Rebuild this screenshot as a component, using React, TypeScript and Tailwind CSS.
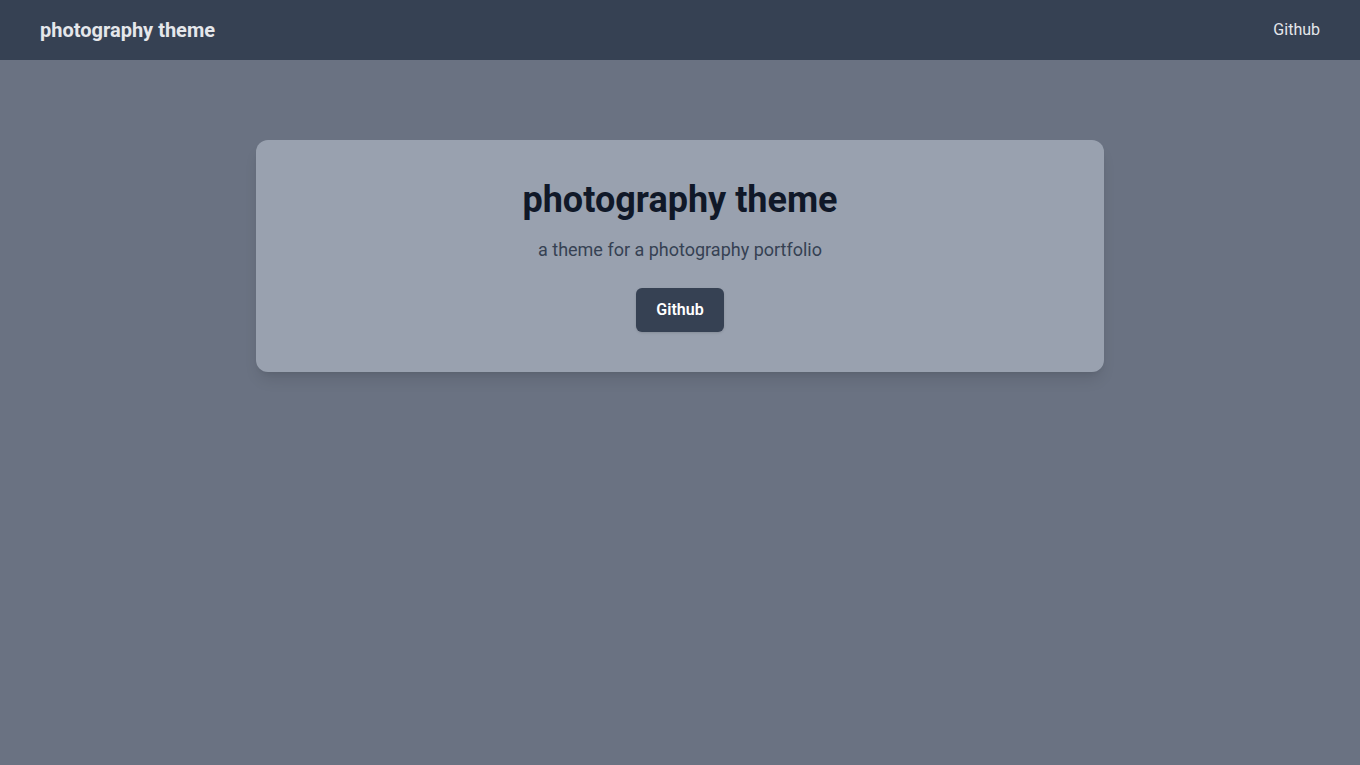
export default function App() {
    return (
        <div className="min-h-screen bg-gray-500 font-['Roboto',sans-serif]">
            <nav className="flex items-center justify-between bg-gray-700 px-10 py-4">
                <a href="#" className="text-xl font-bold text-gray-200">
                    photography theme
                </a>
                <a href="#" className="text-base text-gray-200">
                    Github
                </a>
            </nav>
            <main className="mx-auto max-w-4xl px-6 pt-20">
                <div className="rounded-xl bg-gray-400 p-10 text-center shadow-lg">
                    <h1 className="text-4xl font-bold text-gray-900">photography theme</h1>
                    <p className="mt-4 text-lg text-gray-700">a theme for a photography portfolio</p>
                    <a
                        href="#"
                        className="mt-6 inline-block rounded-md bg-gray-700 px-5 py-2.5 text-base font-semibold text-white shadow"
                    >
                        Github
                    </a>
                </div>
            </main>
        </div>
    );
}
